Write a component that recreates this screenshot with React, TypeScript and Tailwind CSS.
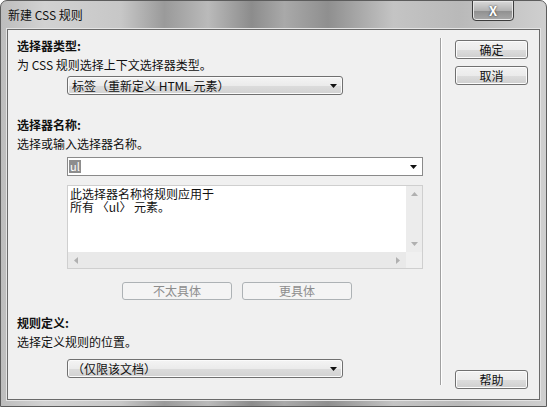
import React from 'react';

const font = { fontFamily: '"Noto Sans CJK SC", "Noto Sans", sans-serif' };

function Arrow({ className = '' }: { className?: string }) {
  return (
    <svg width="7" height="4" viewBox="0 0 7 4" className={className}>
      <path d="M0 0h7L3.5 4z" fill="#111" />
    </svg>
  );
}

function Dropdown({ text }: { text: string }) {
  return (
    <div className="ml-[50px] flex h-[19px] w-[276px] items-center justify-between rounded-[3px] border border-[#707070] bg-[linear-gradient(#f4f4f4,#ebebeb_50%,#dcdcdc_51%,#d2d2d2)] pl-[4px] pr-[5px] shadow-[inset_0_0_0_1px_#fbfbfb]">
      <span className="text-[12px] leading-[16px] text-[#111]">{text}</span>
      <Arrow />
    </div>
  );
}

function WinButton({ label, disabled = false, className = '' }: { label: string; disabled?: boolean; className?: string }) {
  return (
    <div
      className={`flex items-center justify-center rounded-[3px] border text-[12px] leading-[16px] ${
        disabled
          ? 'border-[#adb2b5] bg-[#f4f4f4] text-[#8d8d8d]'
          : 'border-[#707070] bg-[linear-gradient(#f2f2f2,#ebebeb_50%,#dddddd_51%,#cfcfcf)] text-[#111] shadow-[inset_0_0_0_1px_#fcfcfc]'
      } ${className}`}
    >
      {label}
    </div>
  );
}

export default function App() {
  return (
    <div
      style={font}
      className="relative flex h-[407px] w-[547px] flex-col overflow-hidden rounded-t-[7px] border border-[#5c5c5c] bg-[linear-gradient(90deg,#bdbdbd_0%,#d2d2d2_8%,#c7c7c7_22%,#9a9a9a_30%,#bababa_38%,#8c8c8c_46%,#a9a9a9_52%,#8f8f8f_60%,#c4c4c4_72%,#b9b9b9_84%,#cfcfcf_100%)]"
    >
      {/* title bar */}
      <div className="flex h-[28px] shrink-0 items-center pl-[7px]">
        <span className="text-[12px] leading-[16px] text-[#111]">新建 CSS 规则</span>
      </div>
      <div className="absolute left-[471px] top-[-1px] flex h-[21px] w-[42px] items-center justify-center rounded-b-[4px] border border-[#3d3d3d] bg-[linear-gradient(#d9d9d9,#b3b3b3_50%,#8f8f8f_51%,#a8a8a8)] shadow-[inset_0_0_0_1px_#e6e6e6]">
        <span className="text-[13px] font-bold leading-none text-white [text-shadow:0_0_2px_#222]">X</span>
      </div>

      {/* client area */}
      <div className="mx-[6px] mb-[6px] flex flex-1 border border-[#6a6a6a] bg-[#f0f0f0] shadow-[0_0_0_1px_#e4e4e4]">
        <div className="flex w-[432px] flex-col pl-[9px]">
          <div className="mt-[8px] text-[12px] font-bold leading-[16px] text-[#111]">选择器类型:</div>
          <div className="mt-[3px] text-[12px] leading-[16px] text-[#111]">为 CSS 规则选择上下文选择器类型。</div>
          <div className="mt-[3px]">
            <Dropdown text="标签（重新定义 HTML 元素）" />
          </div>

          <div className="mt-[22px] text-[12px] font-bold leading-[16px] text-[#111]">选择器名称:</div>
          <div className="mt-[3px] text-[12px] leading-[16px] text-[#111]">选择或输入选择器名称。</div>
          <div className="ml-[50px] mt-[5px] flex h-[19px] w-[356px] items-center justify-between border border-[#8a8a8a] bg-white pl-[1px] pr-[5px]">
            <span className="bg-[#8d8d8d] px-[1px] text-[11px] leading-[13px] text-white">ul</span>
            <Arrow />
          </div>

          <div className="ml-[50px] mt-[9px] flex h-[84px] w-[356px] flex-col border border-[#cfcfcf] bg-[#f0f0f0]">
            <div className="flex flex-1">
              <div className="flex-1 bg-white px-[2px] pt-[1px] text-[12px] leading-[13px] text-[#111]">
                此选择器名称将规则应用于
                <br />
                所有 〈ul〉 元素。
              </div>
              <div className="flex w-[16px] flex-col items-center justify-between bg-[#ececec] py-[6px]">
                <svg width="7" height="4" viewBox="0 0 7 4"><path d="M0 4h7L3.5 0z" fill="#b0b0b0" /></svg>
                <svg width="7" height="4" viewBox="0 0 7 4"><path d="M0 0h7L3.5 4z" fill="#b0b0b0" /></svg>
              </div>
            </div>
            <div className="flex h-[16px]">
              <div className="flex flex-1 items-center justify-between bg-[#e9e9e9] px-[6px]">
                <svg width="4" height="7" viewBox="0 0 4 7"><path d="M4 0v7L0 3.5z" fill="#b0b0b0" /></svg>
                <svg width="4" height="7" viewBox="0 0 4 7"><path d="M0 0v7L4 3.5z" fill="#b0b0b0" /></svg>
              </div>
              <div className="w-[16px] bg-[#f0f0f0]" />
            </div>
          </div>

          <div className="ml-[105px] mt-[13px] flex gap-[10px]">
            <WinButton label="不太具体" disabled className="h-[18px] w-[110px]" />
            <WinButton label="更具体" disabled className="h-[18px] w-[110px]" />
          </div>

          <div className="mt-[15px] text-[12px] font-bold leading-[16px] text-[#111]">规则定义:</div>
          <div className="mt-[3px] text-[12px] leading-[16px] text-[#111]">选择定义规则的位置。</div>
          <div className="mt-[9px]">
            <Dropdown text="（仅限该文档）" />
          </div>
        </div>

        {/* separator */}
        <div className="mb-[14px] mt-[8px] w-[2px] border-l border-r border-l-[#a0a0a0] border-r-white" />

        <div className="flex flex-1 flex-col pl-[13px] pt-[10px]">
          <WinButton label="确定" className="h-[19px] w-[73px]" />
          <WinButton label="取消" className="mt-[7px] h-[19px] w-[73px]" />
          <div className="flex-1" />
          <WinButton label="帮助" className="mb-[10px] h-[19px] w-[73px]" />
        </div>
      </div>
    </div>
  );
}
